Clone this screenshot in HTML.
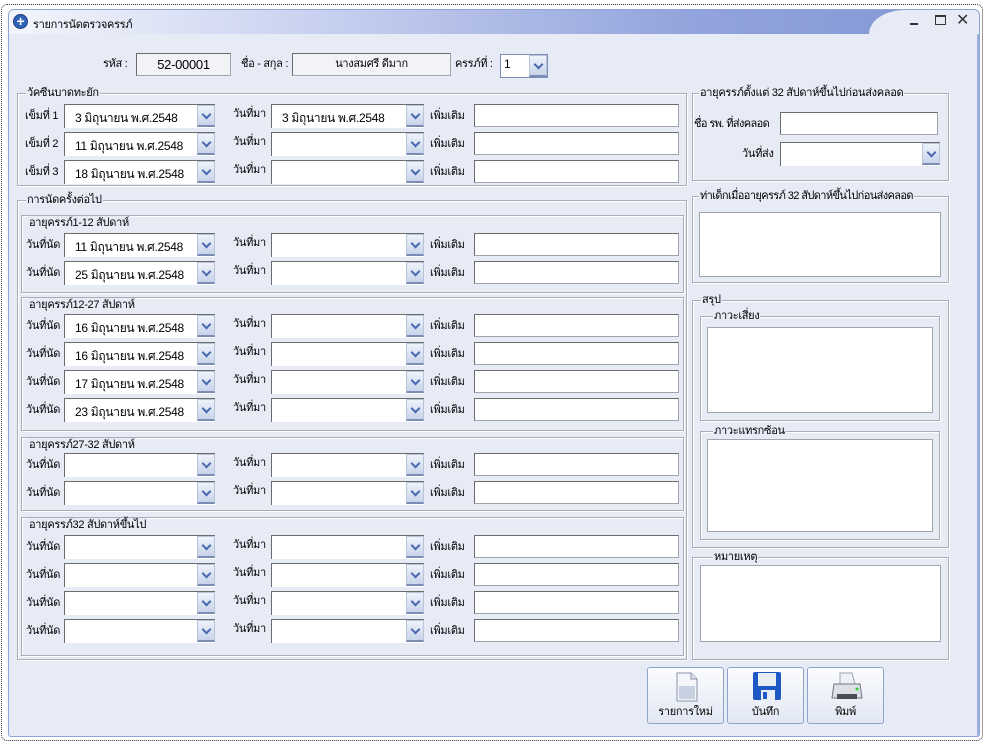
<!DOCTYPE html>
<html><head><meta charset="utf-8"><style>
*{box-sizing:border-box;margin:0;padding:0}
body{width:985px;height:743px;background:#fff;position:relative;overflow:hidden;font-family:"Liberation Sans","DejaVu Sans",sans-serif;font-size:11px;letter-spacing:-0.3px;color:#000}
.a{position:absolute}
#dot{left:1px;top:4px;width:982px;height:737px;border:1px dotted #333;border-radius:6px}
#win{left:8px;top:9px;width:972px;height:728px;border:1px solid #8ea3d6;border-radius:6px 6px 3px 3px;background:#e6ebf6;overflow:hidden}
#title{left:0;top:0;width:970px;height:24px;background:linear-gradient(90deg,#f4f6fc 0%,#c3cdee 35%,#93a4dc 70%,#8396d4 100%)}
#tail{left:860px;top:0;width:112px;height:24px;background:#e6ebf6;border-top-left-radius:60px 40px}
.grp{position:absolute;border:1px solid #a9adb8;box-shadow:1px 1px 0 #fff inset,1px 1px 0 #fff}
.grp>span{position:absolute;top:-8px;left:8px;background:#e6ebf6;padding:0 1px;line-height:14px;white-space:nowrap}
.l{position:absolute;line-height:22px;white-space:nowrap}
.tb{position:absolute;height:23px;background:#fff;border:1px solid #a0a4ad;border-top-color:#6b6b6b;border-left-color:#6b6b6b;white-space:nowrap}
.cb{position:absolute;height:24px;background:#fff;border-top:1px solid #6b6b6b;border-left:1px solid #6b6b6b}
.cb i{position:absolute;right:0;top:0;width:18px;height:22px;background:linear-gradient(#eef3fb,#c8d4ea);border:1px solid #b9c4d9;border-bottom:2px solid #7b8db5}
.cb i:after{content:"";position:absolute;left:5px;top:5px;width:5px;height:5px;border-right:2px solid #4a68b0;border-bottom:2px solid #4a68b0;transform:rotate(45deg)}
.cb b{font-weight:normal;position:absolute;left:10px;top:4px;font-size:12px;white-space:nowrap}
.ta{position:absolute;background:#fff;border:1px solid #a0a4ad}
.btn{position:absolute;top:667px;width:77px;height:57px;border:1px solid #8ea3c8;border-radius:3px;background:linear-gradient(#fbfcfe,#e1e7f3);text-align:center}
.btn span{position:absolute;bottom:3px;left:0;width:100%}
</style></head><body>
<div class="a" id="dot"></div>
<div class="a" id="win">
<div class="a" id="title"></div><div class="a" id="tail"></div>
<div class="a" style="left:4px;top:4px;width:15px;height:15px;border-radius:50%;background:#2f63b8;border:1px solid #1b3e80;color:#fff;font-weight:bold;font-size:14px;line-height:12px;text-align:center">+</div>
<div class="a" style="left:24px;top:5px">รายการนัดตรวจครรภ์</div>
<div class="a" style="left:901px;top:13px;width:8px;height:2px;background:#333"></div>
<div class="a" style="left:926px;top:5px;width:11px;height:10px;border:1px solid #333;border-top:2px solid #333"></div>
<div class="a" style="left:947px;top:0px;font-size:16px;color:#333">✕</div>
<div class="a" style="right:0;top:24px;width:2px;height:704px;background:#9fb0dc"></div>
</div>

<div class="l" style="left:103px;top:53px">รหัส :</div>
<div class="tb" style="left:136px;top:53px;width:95px;background:#f2f3f6;text-align:center;line-height:21px;font-size:13px">52-00001</div>
<div class="l" style="left:241px;top:53px">ชื่อ - สกุล :</div>
<div class="tb" style="left:292px;top:53px;width:159px;background:#f2f3f6;text-align:center;line-height:21px">นางสมศรี ดีมาก</div>
<div class="l" style="left:455px;top:53px">ครรภ์ที่ :</div>
<div class="cb" style="left:500px;top:54px;width:48px;border:1px solid #7b8db5"><b style="left:3px;top:2px">1</b><i></i></div>

<div class="grp" style="left:17px;top:93px;width:670px;height:93px"><span>วัคซีนบาดทะยัก</span></div>
<div class="l" style="left:25px;top:105px">เข็มที่ 1</div><div class="cb" style="left:64px;top:104px;width:151px"><b>3 มิถุนายน พ.ศ.2548</b><i></i></div>
<div class="l" style="left:233px;top:103px">วันที่มา</div><div class="cb" style="left:271px;top:104px;width:153px"><b>3 มิถุนายน พ.ศ.2548</b><i></i></div>
<div class="l" style="left:430px;top:105px">เพิ่มเติม</div><div class="tb" style="left:474px;top:104px;width:205px"></div>
<div class="l" style="left:25px;top:133px">เข็มที่ 2</div><div class="cb" style="left:64px;top:132px;width:151px"><b>11 มิถุนายน พ.ศ.2548</b><i></i></div>
<div class="l" style="left:233px;top:131px">วันที่มา</div><div class="cb" style="left:271px;top:132px;width:153px"><i></i></div>
<div class="l" style="left:430px;top:133px">เพิ่มเติม</div><div class="tb" style="left:474px;top:132px;width:205px"></div>
<div class="l" style="left:25px;top:161px">เข็มที่ 3</div><div class="cb" style="left:64px;top:160px;width:151px"><b>18 มิถุนายน พ.ศ.2548</b><i></i></div>
<div class="l" style="left:233px;top:159px">วันที่มา</div><div class="cb" style="left:271px;top:160px;width:153px"><i></i></div>
<div class="l" style="left:430px;top:161px">เพิ่มเติม</div><div class="tb" style="left:474px;top:160px;width:205px"></div>

<div class="grp" style="left:17px;top:200px;width:670px;height:460px"><span>การนัดครั้งต่อไป</span></div>
<div class="grp" style="left:21px;top:215px;width:663px;height:78px"><span style="left:6px;top:0">อายุครรภ์1-12 สัปดาห์</span></div>
<div class="grp" style="left:21px;top:297px;width:663px;height:134px"><span style="left:6px;top:0">อายุครรภ์12-27 สัปดาห์</span></div>
<div class="grp" style="left:21px;top:437px;width:663px;height:74px"><span style="left:6px;top:0">อายุครรภ์27-32 สัปดาห์</span></div>
<div class="grp" style="left:21px;top:517px;width:663px;height:139px"><span style="left:6px;top:0">อายุครรภ์32 สัปดาห์ขึ้นไป</span></div>

<div class="l" style="left:26px;top:234px">วันที่นัด</div><div class="cb" style="left:64px;top:233px;width:151px"><b>11 มิถุนายน พ.ศ.2548</b><i></i></div><div class="l" style="left:233px;top:232px">วันที่มา</div><div class="cb" style="left:271px;top:233px;width:153px"><i></i></div><div class="l" style="left:430px;top:234px">เพิ่มเติม</div><div class="tb" style="left:474px;top:233px;width:205px"></div>
<div class="l" style="left:26px;top:262px">วันที่นัด</div><div class="cb" style="left:64px;top:261px;width:151px"><b>25 มิถุนายน พ.ศ.2548</b><i></i></div><div class="l" style="left:233px;top:260px">วันที่มา</div><div class="cb" style="left:271px;top:261px;width:153px"><i></i></div><div class="l" style="left:430px;top:262px">เพิ่มเติม</div><div class="tb" style="left:474px;top:261px;width:205px"></div>

<div class="l" style="left:26px;top:315px">วันที่นัด</div><div class="cb" style="left:64px;top:314px;width:151px"><b>16 มิถุนายน พ.ศ.2548</b><i></i></div><div class="l" style="left:233px;top:313px">วันที่มา</div><div class="cb" style="left:271px;top:314px;width:153px"><i></i></div><div class="l" style="left:430px;top:315px">เพิ่มเติม</div><div class="tb" style="left:474px;top:314px;width:205px"></div>
<div class="l" style="left:26px;top:343px">วันที่นัด</div><div class="cb" style="left:64px;top:342px;width:151px"><b>16 มิถุนายน พ.ศ.2548</b><i></i></div><div class="l" style="left:233px;top:341px">วันที่มา</div><div class="cb" style="left:271px;top:342px;width:153px"><i></i></div><div class="l" style="left:430px;top:343px">เพิ่มเติม</div><div class="tb" style="left:474px;top:342px;width:205px"></div>
<div class="l" style="left:26px;top:371px">วันที่นัด</div><div class="cb" style="left:64px;top:370px;width:151px"><b>17 มิถุนายน พ.ศ.2548</b><i></i></div><div class="l" style="left:233px;top:369px">วันที่มา</div><div class="cb" style="left:271px;top:370px;width:153px"><i></i></div><div class="l" style="left:430px;top:371px">เพิ่มเติม</div><div class="tb" style="left:474px;top:370px;width:205px"></div>
<div class="l" style="left:26px;top:399px">วันที่นัด</div><div class="cb" style="left:64px;top:398px;width:151px"><b>23 มิถุนายน พ.ศ.2548</b><i></i></div><div class="l" style="left:233px;top:397px">วันที่มา</div><div class="cb" style="left:271px;top:398px;width:153px"><i></i></div><div class="l" style="left:430px;top:399px">เพิ่มเติม</div><div class="tb" style="left:474px;top:398px;width:205px"></div>

<div class="l" style="left:26px;top:454px">วันที่นัด</div><div class="cb" style="left:64px;top:453px;width:151px"><i></i></div><div class="l" style="left:233px;top:452px">วันที่มา</div><div class="cb" style="left:271px;top:453px;width:153px"><i></i></div><div class="l" style="left:430px;top:454px">เพิ่มเติม</div><div class="tb" style="left:474px;top:453px;width:205px"></div>
<div class="l" style="left:26px;top:482px">วันที่นัด</div><div class="cb" style="left:64px;top:481px;width:151px"><i></i></div><div class="l" style="left:233px;top:480px">วันที่มา</div><div class="cb" style="left:271px;top:481px;width:153px"><i></i></div><div class="l" style="left:430px;top:482px">เพิ่มเติม</div><div class="tb" style="left:474px;top:481px;width:205px"></div>

<div class="l" style="left:26px;top:536px">วันที่นัด</div><div class="cb" style="left:64px;top:535px;width:151px"><i></i></div><div class="l" style="left:233px;top:534px">วันที่มา</div><div class="cb" style="left:271px;top:535px;width:153px"><i></i></div><div class="l" style="left:430px;top:536px">เพิ่มเติม</div><div class="tb" style="left:474px;top:535px;width:205px"></div>
<div class="l" style="left:26px;top:564px">วันที่นัด</div><div class="cb" style="left:64px;top:563px;width:151px"><i></i></div><div class="l" style="left:233px;top:562px">วันที่มา</div><div class="cb" style="left:271px;top:563px;width:153px"><i></i></div><div class="l" style="left:430px;top:564px">เพิ่มเติม</div><div class="tb" style="left:474px;top:563px;width:205px"></div>
<div class="l" style="left:26px;top:592px">วันที่นัด</div><div class="cb" style="left:64px;top:591px;width:151px"><i></i></div><div class="l" style="left:233px;top:590px">วันที่มา</div><div class="cb" style="left:271px;top:591px;width:153px"><i></i></div><div class="l" style="left:430px;top:592px">เพิ่มเติม</div><div class="tb" style="left:474px;top:591px;width:205px"></div>
<div class="l" style="left:26px;top:620px">วันที่นัด</div><div class="cb" style="left:64px;top:619px;width:151px"><i></i></div><div class="l" style="left:233px;top:618px">วันที่มา</div><div class="cb" style="left:271px;top:619px;width:153px"><i></i></div><div class="l" style="left:430px;top:620px">เพิ่มเติม</div><div class="tb" style="left:474px;top:619px;width:205px"></div>

<div class="grp" style="left:692px;top:93px;width:257px;height:88px"><span style="left:6px">อายุครรภ์ตั้งแต่ 32 สัปดาห์ขึ้นไปก่อนส่งคลอด</span></div>
<div class="l" style="left:694px;top:113px;letter-spacing:-0.6px">ชื่อ รพ. ที่ส่งคลอด</div><div class="tb" style="left:780px;top:112px;width:158px"></div>
<div class="l" style="left:742px;top:143px">วันที่ส่ง</div><div class="cb" style="left:780px;top:142px;width:160px"><i></i></div>
<div class="grp" style="left:692px;top:196px;width:257px;height:87px"><span style="left:6px;letter-spacing:-0.6px">ท่าเด็กเมื่ออายุครรภ์ 32 สัปดาห์ขึ้นไปก่อนส่งคลอด</span></div>
<div class="ta" style="left:699px;top:212px;width:242px;height:65px"></div>
<div class="grp" style="left:692px;top:300px;width:257px;height:248px"><span>สรุป</span></div>
<div class="grp" style="left:700px;top:316px;width:240px;height:105px"><span style="left:12px">ภาวะเสี่ยง</span></div>
<div class="ta" style="left:707px;top:327px;width:226px;height:86px"></div>
<div class="grp" style="left:700px;top:431px;width:240px;height:109px"><span style="left:12px">ภาวะแทรกซ้อน</span></div>
<div class="ta" style="left:707px;top:439px;width:226px;height:93px"></div>
<div class="grp" style="left:692px;top:557px;width:257px;height:103px"><span style="left:20px">หมายเหตุ</span></div>
<div class="ta" style="left:700px;top:565px;width:241px;height:77px"></div>

<div class="btn" style="left:647px"><svg class="a" style="left:28px;top:4px" width="22" height="30"><path d="M1 1H15L21 7V29H1Z" fill="#f4f6fa" stroke="#8a93a8"/><path d="M15 1V7H21" fill="#dfe4ee" stroke="#8a93a8"/><rect x="3" y="14" width="16" height="13" fill="#c7d1e2"/></svg><span>รายการใหม่</span></div>
<div class="btn" style="left:727px"><svg class="a" style="left:25px;top:4px" width="28" height="28"><rect x="0" y="0" width="28" height="28" rx="2" fill="#1d58c4"/><rect x="5" y="1" width="18" height="13" fill="#e8ecf3"/><rect x="8" y="18" width="14" height="10" fill="#e8ecf3"/><rect x="10" y="20" width="4" height="7" fill="#1d58c4"/></svg><span>บันทึก</span></div>
<div class="btn" style="left:807px"><svg class="a" style="left:23px;top:4px" width="32" height="30"><path d="M9 1L21 1L24 12H9Z" fill="#eef2f7" stroke="#9aa3b0"/><path d="M3 12H29L31 26H1Z" fill="#dde1e6" stroke="#6f7784"/><rect x="6" y="22" width="20" height="5" fill="#4a4f57"/><circle cx="26" cy="17" r="1.5" fill="#3c3"/></svg><span>พิมพ์</span></div>
</body></html>
